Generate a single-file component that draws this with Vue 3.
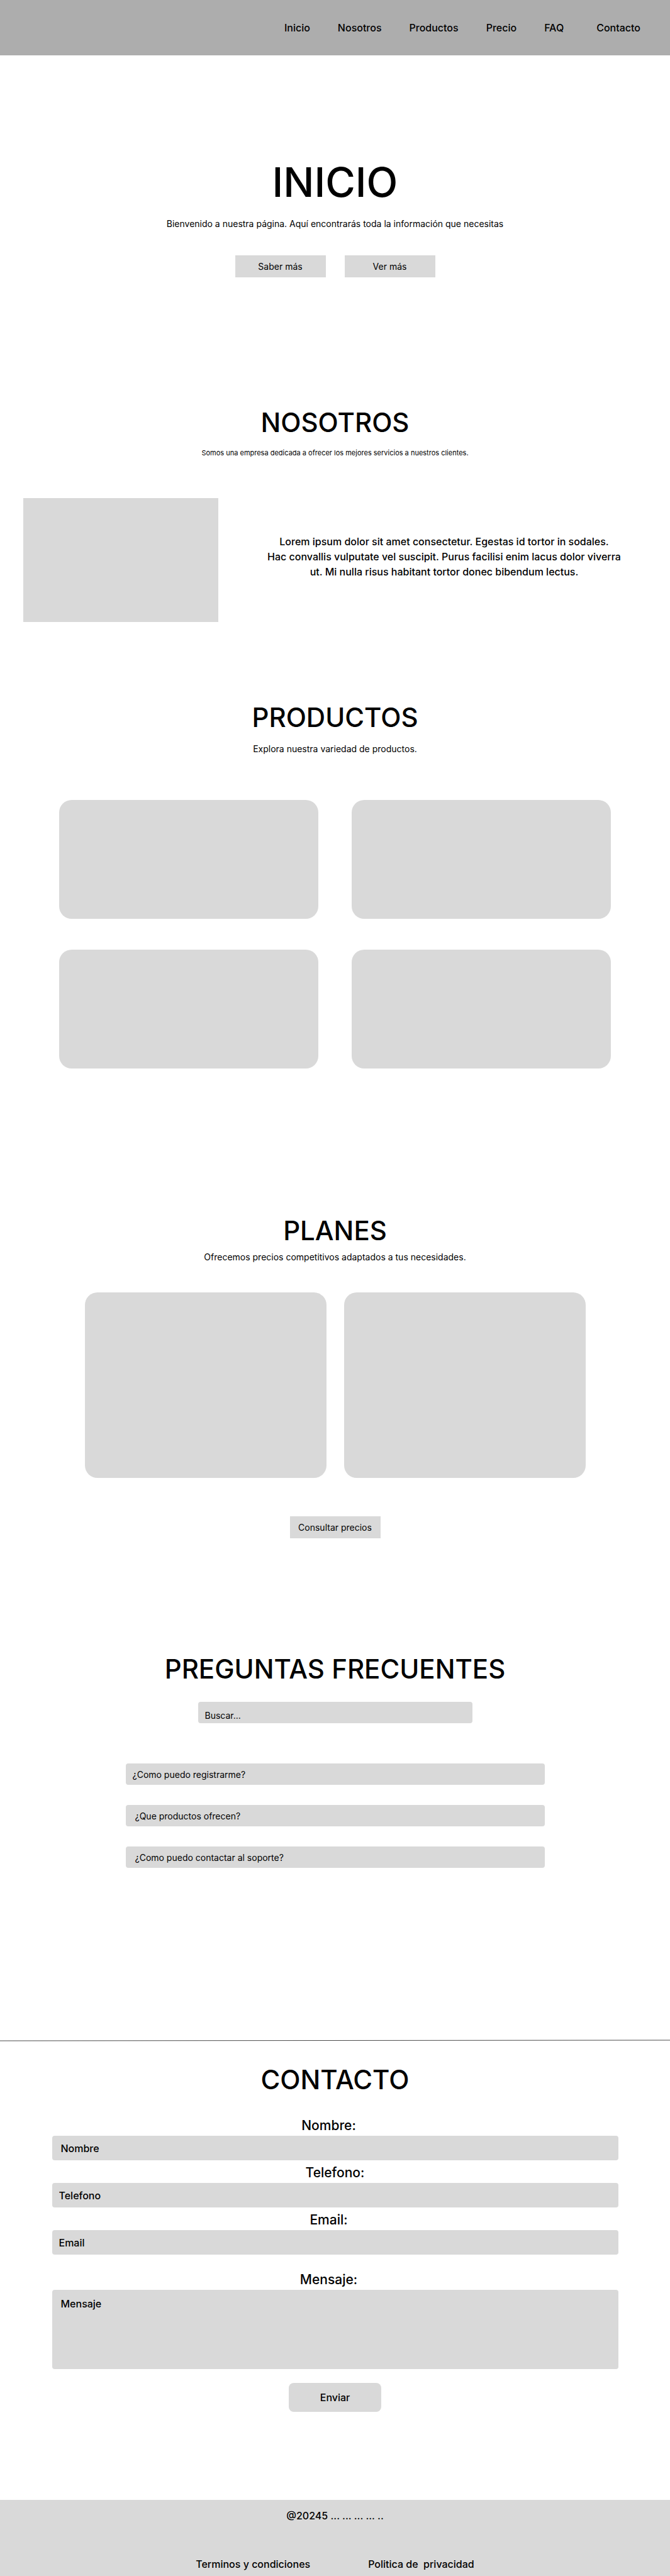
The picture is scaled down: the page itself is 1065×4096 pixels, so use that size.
<script setup>
const navLinks = [
  { label: 'Inicio', href: '#inicio' },
  { label: 'Nosotros', href: '#nosotros' },
  { label: 'Productos', href: '#productos' },
  { label: 'Precio', href: '#planes' },
  { label: 'FAQ', href: '#faq' },
  { label: 'Contacto', href: '#contacto' },
]

const questions = [
  { text: '¿Como puedo registrarme?', wide: false },
  { text: '¿Que productos ofrecen?', wide: true },
  { text: '¿Como puedo contactar al soporte?', wide: true },
]

const fields = [
  { id: 'nombre', label: 'Nombre', type: 'text', shifted: true, wide: true },
  { id: 'telefono', label: 'Telefono', type: 'tel', shifted: false, wide: false },
  { id: 'email', label: 'Email', type: 'email', shifted: true, wide: false },
]
</script>

<template>
  <div class="page">
    <header class="topbar">
      <nav class="nav">
        <a v-for="link in navLinks" :key="link.label" :href="link.href">{{ link.label }}</a>
      </nav>
    </header>

    <main>
      <section id="inicio" class="hero">
        <h1>INICIO</h1>
        <p class="lead">Bienvenido a nuestra página. Aquí encontrarás toda la información que necesitas</p>
        <div class="actions">
          <button type="button" class="btn">Saber más</button>
          <button type="button" class="btn">Ver más</button>
        </div>
      </section>

      <section id="nosotros" class="about">
        <h2>NOSOTROS</h2>
        <p class="note">Somos una empresa dedicada a ofrecer los mejores servicios a nuestros clientes.</p>
        <div class="about-row">
          <div class="about-image"></div>
          <p class="about-text">
            Lorem ipsum dolor sit amet consectetur. Egestas id tortor in sodales.<br />
            Hac convallis vulputate vel suscipit. Purus facilisi enim lacus dolor viverra<br />
            ut. Mi nulla risus habitant tortor donec bibendum lectus.
          </p>
        </div>
      </section>

      <section id="productos" class="products">
        <h2>PRODUCTOS</h2>
        <p class="lead">Explora nuestra variedad de productos.</p>
        <div class="product-grid">
          <div v-for="n in 4" :key="n" class="card"></div>
        </div>
      </section>

      <section id="planes" class="plans">
        <h2>PLANES</h2>
        <p class="lead">Ofrecemos precios competitivos adaptados a tus necesidades.</p>
        <div class="plan-grid">
          <div v-for="n in 2" :key="n" class="card"></div>
        </div>
        <button type="button" class="btn">Consultar precios</button>
      </section>

      <section id="faq" class="faq">
        <h2>PREGUNTAS FRECUENTES</h2>
        <input class="search" type="search" placeholder="Buscar..." aria-label="Buscar" />
        <div class="questions">
          <button
            v-for="q in questions"
            :key="q.text"
            type="button"
            class="question"
            :class="{ wide: q.wide }"
          >{{ q.text }}</button>
        </div>
      </section>

      <svg class="divider" aria-hidden="true">
        <line x1="0" y1="2" x2="100%" y2="1" />
      </svg>

      <section id="contacto" class="contact">
        <h2>CONTACTO</h2>
        <form class="form" @submit.prevent>
          <div v-for="f in fields" :key="f.id" class="field">
            <label :for="f.id" :class="{ shifted: f.shifted }">{{ f.label }}:</label>
            <input :id="f.id" :type="f.type" :placeholder="f.label" :class="{ wide: f.wide }" />
          </div>
          <div class="field message">
            <label for="mensaje" class="shifted">Mensaje:</label>
            <textarea id="mensaje" placeholder="Mensaje"></textarea>
          </div>
          <button type="submit" class="submit">Enviar</button>
        </form>
      </section>
    </main>

    <footer class="footer">
      <p>@20245 ... ... ... ... ..</p>
      <div class="legal">
        <a href="#terminos">Terminos y condiciones</a>
        <a href="#privacidad">Politica de&nbsp; privacidad</a>
      </div>
    </footer>
  </div>
</template>

<style>
body {
  margin: 0;
  background: #ffffff;
}
</style>

<style scoped>
.page {
  font-family: Inter, "Open Sans", sans-serif;
  font-weight: 500;
  color: #000000;
}

.page * {
  box-sizing: border-box;
}

h1,
h2,
p {
  margin: 0;
  font-weight: 500;
  text-align: center;
}

h1 {
  font-size: 65px;
  line-height: 80px;
}

h2 {
  font-size: 42px;
  line-height: 56px;
}

a {
  color: inherit;
  text-decoration: none;
}

button,
input,
textarea {
  border: 0;
  font: inherit;
  color: inherit;
  background: #d9d9d9;
}

input,
textarea {
  display: block;
  width: 100%;
  border-radius: 4px;
  outline: none;
}

input::placeholder,
textarea::placeholder {
  color: #000000;
  opacity: 1;
}

section {
  display: flex;
  flex-direction: column;
  align-items: center;
}

.lead {
  font-size: 14px;
  font-weight: 400;
  line-height: 20px;
}

.note {
  font-size: 11px;
  font-weight: 400;
  line-height: 16px;
}

.btn {
  width: 144px;
  height: 35px;
  padding: 0;
  font-size: 14px;
  font-weight: 400;
}

.card {
  border-radius: 20px;
  background: #d9d9d9;
}

/* Header */
.topbar {
  display: flex;
  align-items: center;
  justify-content: flex-end;
  height: 88px;
  padding: 0 47px;
  background: #adadad;
}

.nav {
  display: flex;
  gap: 44px;
  font-size: 16px;
  line-height: 20px;
}

.nav a:last-child {
  margin-left: 8px;
}

/* Hero */
.hero {
  padding-top: 162px;
}

.hero .lead {
  margin-top: 16px;
}

.actions {
  display: flex;
  gap: 30px;
  margin-top: 40px;
}

/* About */
.about {
  padding-top: 203px;
}

.about .note {
  margin-top: 12px;
}

.about-row {
  display: flex;
  align-self: stretch;
  gap: 72px;
  margin-top: 64px;
  padding: 0 72px 0 37px;
}

.about-image {
  flex: 0 0 310px;
  height: 197px;
  background: #d9d9d9;
}

.about-text {
  flex: 1;
  padding-top: 57px;
  font-size: 16px;
  line-height: 24px;
}

/* Products */
.products {
  padding-top: 124px;
}

.products .lead {
  margin-top: 12px;
}

.product-grid {
  display: grid;
  grid-template-columns: 1fr 1fr;
  grid-auto-rows: 189px;
  gap: 49px 53px;
  width: 100%;
  max-width: 877px;
  margin-top: 71px;
}

/* Plans */
.plans {
  padding-top: 230px;
}

.plans .lead {
  margin-top: 4px;
}

.plan-grid {
  display: grid;
  grid-template-columns: 1fr 1fr;
  grid-auto-rows: 295px;
  gap: 28px;
  width: 100%;
  max-width: 796px;
  margin: 46px 0 61px;
}

/* FAQ */
.faq {
  padding-top: 180px;
}

.search {
  width: 100%;
  max-width: 436px;
  height: 34px;
  margin-top: 24px;
  padding: 8px 11px 0;
  font-size: 14px;
  font-weight: 400;
}

.questions {
  display: flex;
  flex-direction: column;
  gap: 32px;
  width: 100%;
  max-width: 666px;
  margin-top: 64px;
}

.question {
  height: 34px;
  padding: 0 11px;
  border-radius: 4px;
  font-size: 14px;
  font-weight: 400;
  text-align: left;
}

.question.wide {
  padding: 0 15px;
}

/* Contact */
.divider {
  display: block;
  width: 100%;
  height: 3px;
  margin-top: 273px;
}

.divider line {
  stroke: #000000;
  stroke-width: 1;
  opacity: 0.7;
}

.contact {
  padding-top: 33px;
}

.form {
  display: flex;
  flex-direction: column;
  align-items: center;
  width: 100%;
  max-width: 900px;
  margin-top: 29px;
}

.field {
  width: 100%;
  margin-bottom: 4px;
}

.field label {
  display: block;
  font-size: 21px;
  line-height: 32px;
  text-align: center;
}

.field label.shifted {
  padding-right: 20px;
}

.field input {
  height: 39px;
  padding: 0 11px;
  font-size: 16px;
}

.field input.wide {
  padding: 0 14px;
}

.field.message {
  margin: 20px 0 22px;
}

.field textarea {
  height: 126px;
  padding: 12px 14px;
  font-size: 16px;
  line-height: 20px;
  resize: none;
}

.submit {
  width: 147px;
  height: 46px;
  border-radius: 8px;
  font-size: 16px;
}

/* Footer */
.footer {
  margin-top: 140px;
  padding: 15px 0 9px;
  font-size: 16px;
  line-height: 20px;
  background: #d9d9d9;
}

.legal {
  display: flex;
  justify-content: center;
  gap: 92px;
  margin-top: 57px;
}
</style>
